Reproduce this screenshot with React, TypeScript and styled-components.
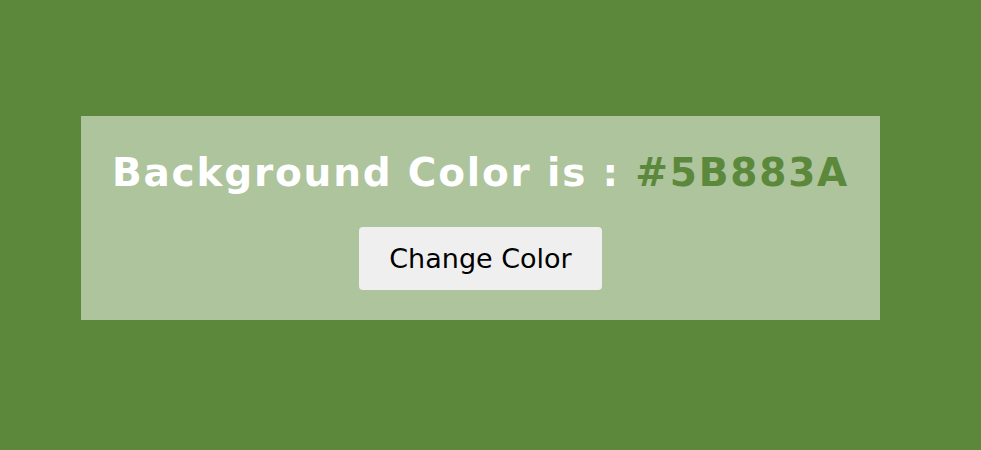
import React from "react";
import styled, { createGlobalStyle } from "styled-components";

const Global = createGlobalStyle`
  html, body { margin: 0; padding: 0; }
  body {
    background: #5b883a;
    font-family: "DejaVu Sans", Verdana, sans-serif;
    height: 450px;
    overflow: hidden;
  }
`;

const Page = styled.div`
  padding: 116px 0 0 81px;
`;

const Panel = styled.div`
  width: 799px;
  height: 204px;
  box-sizing: border-box;
  background: rgba(255, 255, 255, 0.5);
  display: flex;
  flex-direction: column;
  align-items: center;
  padding-top: 30px;
`;

const Heading = styled.h1`
  margin: 0;
  font-size: 39px;
  font-weight: bold;
  letter-spacing: 1.8px;
  color: #ffffff;
  line-height: 54px;
  white-space: nowrap;
`;

const Hex = styled.span`
  color: #5b883a;
`;

const Button = styled.button`
  margin-top: 27px;
  width: 243px;
  height: 63px;
  border: none;
  border-radius: 4px;
  background: #efefef;
  color: #000;
  font-family: "DejaVu Sans", Verdana, sans-serif;
  font-size: 27px;
  cursor: pointer;
`;

export default function App() {
  return (
    <>
      <Global />
      <Page>
        <Panel>
          <Heading>
            Background Color is : <Hex>#5B883A</Hex>
          </Heading>
          <Button>Change Color</Button>
        </Panel>
      </Page>
    </>
  );
}
